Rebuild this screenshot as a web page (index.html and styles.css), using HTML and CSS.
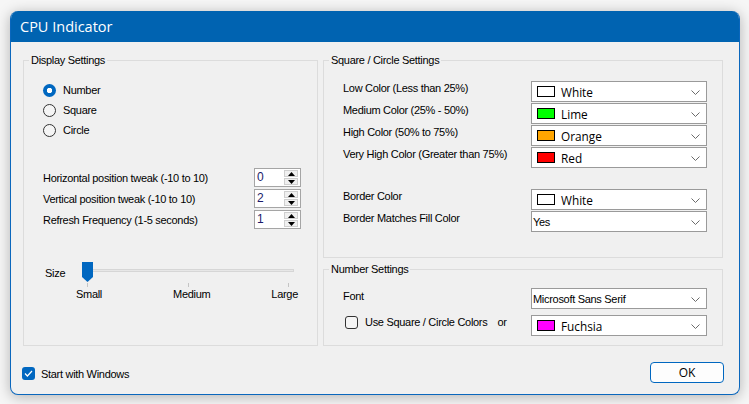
FILE: index.html
```html
<!DOCTYPE html>
<html>
<head>
<meta charset="utf-8">
<title>CPU Indicator</title>
<link rel="stylesheet" href="styles.css">
</head>
<body>
<div class="window">
  <div class="titlebar">CPU Indicator</div>
  <div class="client">
    <div class="groups">
      <div class="group group-display">
        <span class="group-title">Display Settings</span>
        <div class="radios">
          <div class="radio-row"><span class="radio checked"></span><span>Number</span></div>
          <div class="radio-row"><span class="radio"></span><span>Square</span></div>
          <div class="radio-row"><span class="radio"></span><span>Circle</span></div>
        </div>
        <div class="spins">
          <span class="spin-label">Horizontal position tweak (-10 to 10)</span>
          <div class="spin"><span class="spin-val">0</span><span class="spin-btns"><span class="spin-btn"><svg width="7" height="4" viewBox="0 0 7 4"><polygon points="3.5,0 7,4 0,4" fill="#000"/></svg></span><span class="spin-btn"><svg width="7" height="4" viewBox="0 0 7 4"><polygon points="0,0 7,0 3.5,4" fill="#000"/></svg></span></span></div>
          <span class="spin-label">Vertical position tweak (-10 to 10)</span>
          <div class="spin"><span class="spin-val">2</span><span class="spin-btns"><span class="spin-btn"><svg width="7" height="4" viewBox="0 0 7 4"><polygon points="3.5,0 7,4 0,4" fill="#000"/></svg></span><span class="spin-btn"><svg width="7" height="4" viewBox="0 0 7 4"><polygon points="0,0 7,0 3.5,4" fill="#000"/></svg></span></span></div>
          <span class="spin-label">Refresh Frequency (1-5 seconds)</span>
          <div class="spin"><span class="spin-val">1</span><span class="spin-btns"><span class="spin-btn"><svg width="7" height="4" viewBox="0 0 7 4"><polygon points="3.5,0 7,4 0,4" fill="#000"/></svg></span><span class="spin-btn"><svg width="7" height="4" viewBox="0 0 7 4"><polygon points="0,0 7,0 3.5,4" fill="#000"/></svg></span></span></div>
        </div>
        <div class="size-row">
          <span class="size-label">Size</span>
          <div class="slider">
            <span class="track"></span>
            <svg class="thumb" width="11" height="20" viewBox="0 0 11 20"><polygon points="0,0 11,0 11,15 5.5,20 0,15" fill="#0067c0"/></svg>
            <span class="tick" style="left:6px"></span>
            <span class="tick" style="left:107px"></span>
            <span class="tick" style="left:207px"></span>
          </div>
        </div>
        <div class="size-labels"><span>Small</span><span class="mid">Medium</span><span>Large</span></div>
      </div>

      <div class="group group-shape">
        <span class="group-title">Square / Circle Settings</span>
        <div class="form form-shape">
          <span class="lbl">Low Color (Less than 25%)</span>
          <div class="combo"><span class="swatch" style="background:#ffffff"></span><span class="combo-text big">White</span><svg class="chev" width="9" height="5" viewBox="0 0 9 5"><polyline points="0.5,0.5 4.5,4.5 8.5,0.5" fill="none" stroke="#6b6b6b" stroke-width="1"/></svg></div>
          <span class="lbl">Medium Color (25% - 50%)</span>
          <div class="combo"><span class="swatch" style="background:#00ff00"></span><span class="combo-text big">Lime</span><svg class="chev" width="9" height="5" viewBox="0 0 9 5"><polyline points="0.5,0.5 4.5,4.5 8.5,0.5" fill="none" stroke="#6b6b6b" stroke-width="1"/></svg></div>
          <span class="lbl">High Color (50% to 75%)</span>
          <div class="combo"><span class="swatch" style="background:#ffa500"></span><span class="combo-text big">Orange</span><svg class="chev" width="9" height="5" viewBox="0 0 9 5"><polyline points="0.5,0.5 4.5,4.5 8.5,0.5" fill="none" stroke="#6b6b6b" stroke-width="1"/></svg></div>
          <span class="lbl">Very High Color (Greater than 75%)</span>
          <div class="combo"><span class="swatch" style="background:#ff0000"></span><span class="combo-text big">Red</span><svg class="chev" width="9" height="5" viewBox="0 0 9 5"><polyline points="0.5,0.5 4.5,4.5 8.5,0.5" fill="none" stroke="#6b6b6b" stroke-width="1"/></svg></div>
          <div class="form-spacer"></div>
          <span class="lbl">Border Color</span>
          <div class="combo"><span class="swatch" style="background:#ffffff"></span><span class="combo-text big">White</span><svg class="chev" width="9" height="5" viewBox="0 0 9 5"><polyline points="0.5,0.5 4.5,4.5 8.5,0.5" fill="none" stroke="#6b6b6b" stroke-width="1"/></svg></div>
          <span class="lbl">Border Matches Fill Color</span>
          <div class="combo"><span class="combo-text plain">Yes</span><svg class="chev" width="9" height="5" viewBox="0 0 9 5"><polyline points="0.5,0.5 4.5,4.5 8.5,0.5" fill="none" stroke="#6b6b6b" stroke-width="1"/></svg></div>
        </div>
      </div>

      <div class="group group-number">
        <span class="group-title">Number Settings</span>
        <div class="form form-number">
          <span class="lbl">Font</span>
          <div class="combo"><span class="combo-text plain">Microsoft Sans Serif</span><svg class="chev" width="9" height="5" viewBox="0 0 9 5"><polyline points="0.5,0.5 4.5,4.5 8.5,0.5" fill="none" stroke="#6b6b6b" stroke-width="1"/></svg></div>
          <div class="check-row"><span class="checkbox"></span><span>Use Square / Circle Colors</span><span class="or">or</span></div>
          <div class="combo"><span class="swatch" style="background:#ff00ff"></span><span class="combo-text big">Fuchsia</span><svg class="chev" width="9" height="5" viewBox="0 0 9 5"><polyline points="0.5,0.5 4.5,4.5 8.5,0.5" fill="none" stroke="#6b6b6b" stroke-width="1"/></svg></div>
        </div>
      </div>
    </div>

    <div class="footer">
      <div class="start">
        <span class="checkbox checked"><svg width="9" height="7" viewBox="0 0 9 7"><polyline points="1,3.5 3.4,6 8,1" fill="none" stroke="#fff" stroke-width="1.2"/></svg></span>
        <span>Start with Windows</span>
      </div>
      <button class="ok">OK</button>
    </div>
  </div>
</div>
</body>
</html>
```

FILE: styles.css
```css
html, body {
  margin: 0;
  padding: 0;
}
body {
  background: #f6f6f6;
  font-family: "Liberation Sans", Arial, sans-serif;
  font-size: 11px;
  letter-spacing: -0.3px;
  color: #000;
  width: 749px;
  height: 404px;
  overflow: hidden;
}
.window {
  margin: 11px 0 0 10px;
  width: 730px;
  height: 384px;
  box-sizing: border-box;
  border: 1px solid #0a67bd;
  border-top: none;
  border-radius: 8px;
  overflow: hidden;
  background: #f0f0f0;
  box-shadow: 0 2px 14px rgba(0, 0, 0, 0.28);
  display: flex;
  flex-direction: column;
}
.titlebar {
  height: 31px;
  flex: none;
  background: #0063b1;
  color: #fff;
  font-family: "Open Sans", "Noto Sans", sans-serif;
  font-size: 14.5px;
  letter-spacing: 0;
  line-height: 31px;
  padding-left: 10px;
  margin: 0 -1px;
}
.client {
  padding: 18px 15px 0 12px;
  display: flex;
  flex-direction: column;
}
.groups {
  display: grid;
  grid-template-columns: 295px 400px;
  grid-template-rows: 198px 77px;
  column-gap: 5px;
  row-gap: 11px;
}
.group {
  position: relative;
  border: 1px solid #dcdcdc;
  box-sizing: border-box;
}
.group-title {
  position: absolute;
  top: -7px;
  left: 5px;
  padding: 0 2px;
  background: #f0f0f0;
  line-height: 13px;
}
.group-display {
  grid-row: 1 / 3;
  grid-column: 1;
}
.group-shape {
  grid-row: 1;
  grid-column: 2;
}
.group-number {
  grid-row: 2;
  grid-column: 2;
}

/* radios */
.radios {
  padding: 19px 0 0 19px;
  display: flex;
  flex-direction: column;
}
.radio-row {
  height: 20px;
  display: flex;
  align-items: center;
  gap: 7px;
}
.radio {
  width: 13px;
  height: 13px;
  box-sizing: border-box;
  border-radius: 50%;
  border: 1px solid #333;
  background: #f5f5f5;
  flex: none;
}
.radio.checked {
  border: none;
  background: radial-gradient(circle, #fff 0 2.4px, #0067c0 3px);
}

/* spinners */
.spins {
  margin-top: 28px;
  padding-left: 19px;
  display: grid;
  grid-template-columns: 211px 47px;
  grid-auto-rows: 19px;
  row-gap: 2px;
  align-items: center;
}
.spin {
  height: 19px;
  box-sizing: border-box;
  border: 1px solid #a5a5a5;
  background: #fff;
  display: flex;
  align-items: stretch;
}
.spin-val {
  flex: 1;
  padding-left: 2px;
  line-height: 17px;
  font-size: 12px;
  letter-spacing: 0;
  color: #1a1a6a;
}
.spin-btns {
  width: 14px;
  display: flex;
  flex-direction: column;
  gap: 1px;
  padding: 1px 2px 1px 0;
}
.spin-btn {
  flex: 1;
  background: #f0f0f0;
  border: 1px solid #cfcfcf;
  display: flex;
  align-items: center;
  justify-content: center;
}
.spin-btn svg {
  display: block;
}

/* slider */
.size-row {
  margin-top: 33px;
  padding-left: 21px;
  display: flex;
  align-items: flex-start;
}
.size-label {
  width: 36px;
  line-height: 13px;
  margin-top: 5px;
}
.slider {
  position: relative;
  width: 216px;
  height: 26px;
}
.track {
  position: absolute;
  left: 6px;
  right: 3px;
  top: 7px;
  height: 3px;
  background: #e7e7e7;
  border: 1px solid #d6d6d6;
  box-sizing: border-box;
}
.thumb {
  position: absolute;
  left: 1px;
  top: 0;
}
.tick {
  position: absolute;
  top: 21px;
  width: 1px;
  height: 4px;
  background: #c4c4c4;
}
.size-labels {
  margin-left: 52px;
  width: 222px;
  display: flex;
  justify-content: space-between;
  line-height: 13px;
}
.size-labels .mid {
  margin-left: 10px;
}

/* forms */
.form {
  padding: 20px 0 0 19px;
  display: grid;
  grid-template-columns: 188px 176px;
  grid-auto-rows: 21px;
  row-gap: 1px;
}
.form-shape {
  grid-template-rows: 21px 21px 21px 21px 19px 21px 21px;
}
.form-spacer {
  grid-column: 1 / -1;
}
.lbl {
  line-height: 13px;
  padding-top: 1px;
}
.combo {
  height: 21px;
  box-sizing: border-box;
  border: 1px solid #9a9a9a;
  background: #fff;
  display: flex;
  align-items: center;
  padding-left: 5px;
  position: relative;
}
.swatch {
  width: 18px;
  height: 11px;
  box-sizing: border-box;
  border: 1px solid #000;
  flex: none;
  margin-right: 6px;
}
.combo-text.big {
  font-family: "Open Sans", "Noto Sans", sans-serif;
  font-size: 11.8px;
  letter-spacing: 0;
  padding-top: 1px;
}
.combo-text.plain {
  margin-left: -4px;
  font-size: 11px;
  padding-top: 1px;
}
.chev {
  position: absolute;
  right: 6px;
  top: 8px;
}
.form-number {
  padding-top: 18px;
  grid-auto-rows: 21px;
  row-gap: 6px;
}
.form-number .lbl {
  padding-top: 2px;
}
.check-row {
  display: flex;
  align-items: center;
  gap: 7px;
  margin-left: 2px;
  height: 14px;
}
.check-row .or {
  margin-left: 3px;
}
.checkbox {
  width: 13px;
  height: 13px;
  box-sizing: border-box;
  border: 1px solid #333;
  border-radius: 3px;
  background: #f5f5f5;
  flex: none;
  display: flex;
  align-items: center;
  justify-content: center;
}
.checkbox.checked {
  border: none;
  background: #0067c0;
}

/* footer */
.footer {
  margin-top: 16px;
  display: flex;
  justify-content: space-between;
  align-items: center;
}
.start {
  display: flex;
  align-items: center;
  gap: 6px;
  margin-left: -1px;
  padding-top: 2px;
}
.ok {
  width: 74px;
  height: 21px;
  box-sizing: border-box;
  border: 1px solid #0067c0;
  border-radius: 4px;
  background: #fdfdfd;
  font-family: "Open Sans", "Noto Sans", sans-serif;
  font-size: 12px;
  letter-spacing: 0;
  color: #000;
  padding: 0;
  line-height: 19px;
}
```
